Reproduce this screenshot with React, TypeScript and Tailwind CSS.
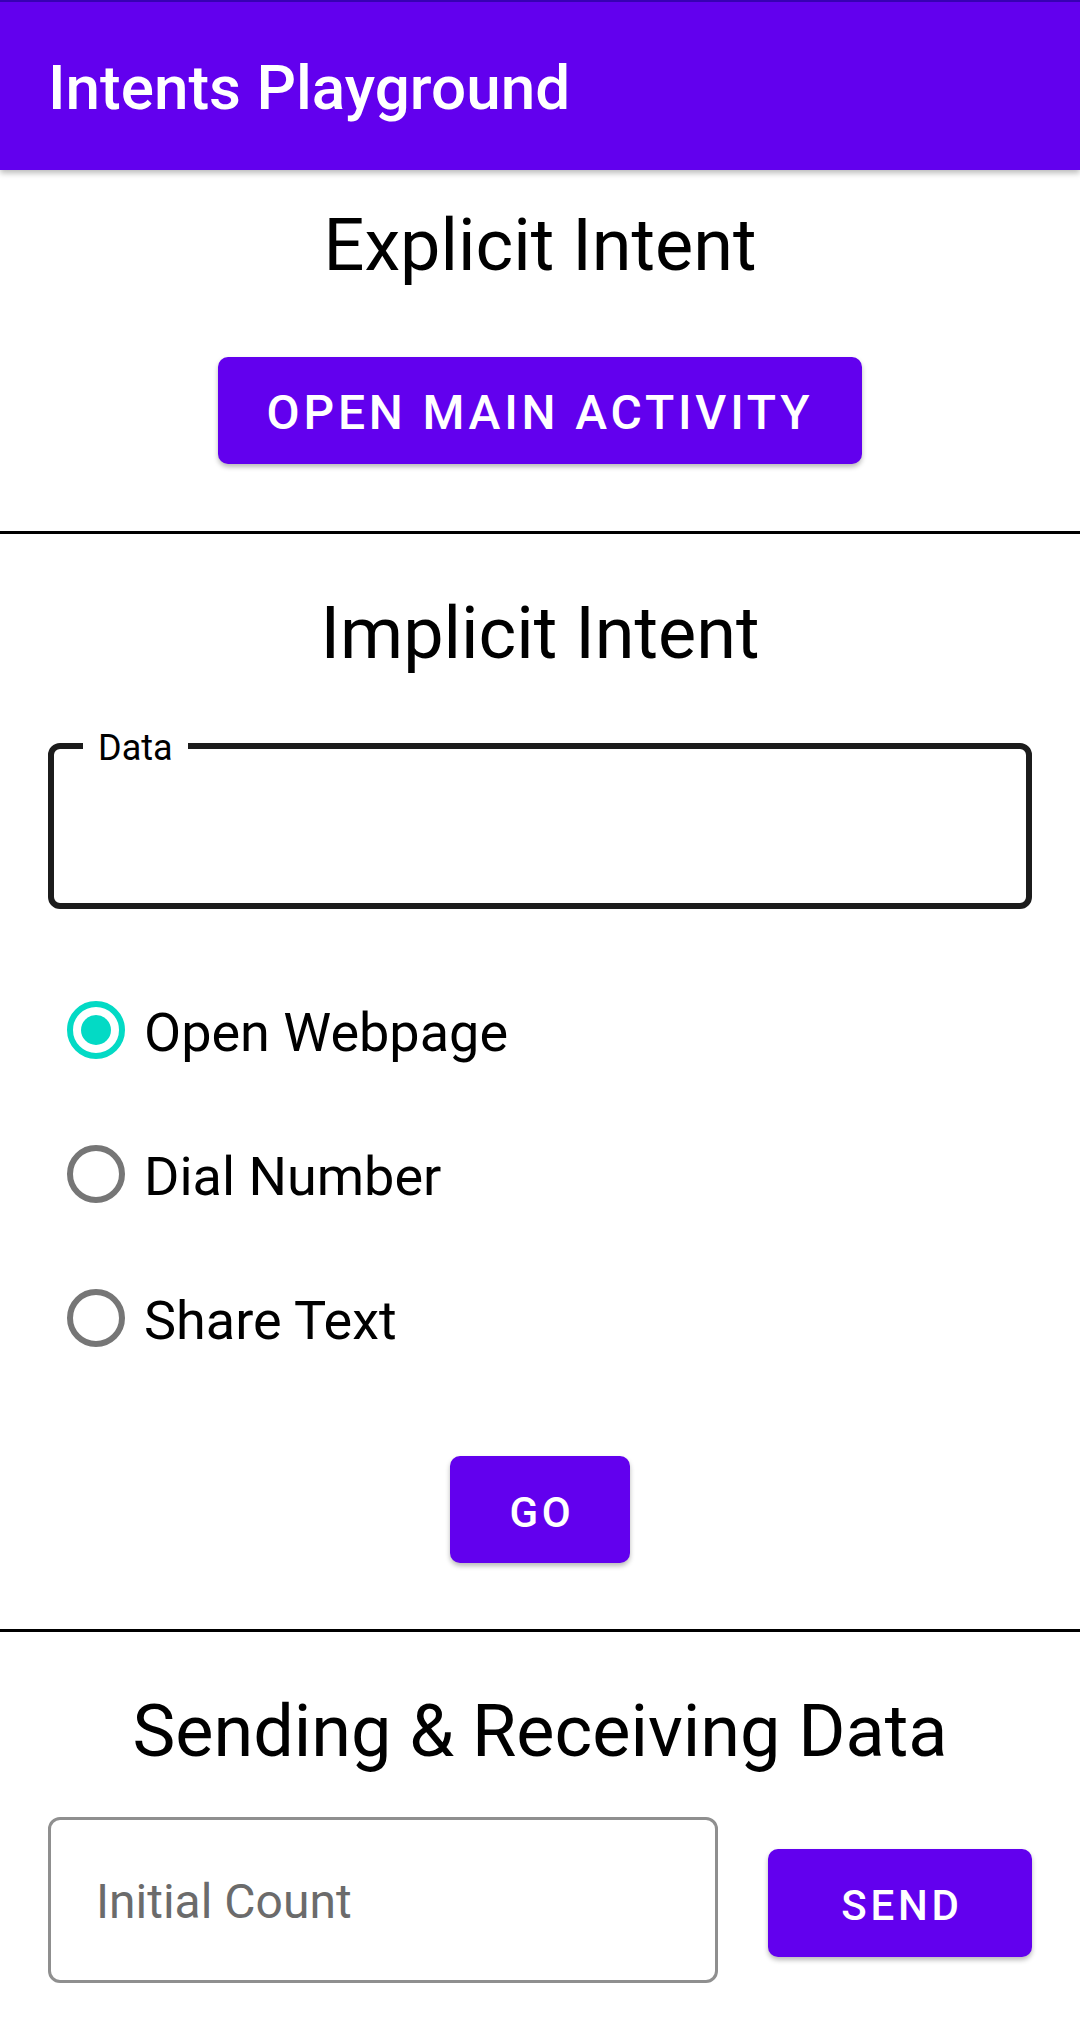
import React, { useState } from 'react';

type IntentAction = 'webpage' | 'dial' | 'share';

const ACTIONS: { id: IntentAction; label: string }[] = [
  { id: 'webpage', label: 'Open Webpage' },
  { id: 'dial', label: 'Dial Number' },
  { id: 'share', label: 'Share Text' },
];

const Divider: React.FC = () => <div className="h-[3px] w-full bg-black" />;

const SectionTitle: React.FC<{ children: React.ReactNode; className?: string }> = ({ children, className }) => (
  <h2 className={`text-center text-[72px] leading-[84px] font-normal text-black ${className ?? ''}`}>{children}</h2>
);

const App: React.FC = () => {
  const [action, setAction] = useState<IntentAction>('webpage');
  const [data, setData] = useState('');
  const [count, setCount] = useState('');

  return (
    <div className="min-h-screen bg-white font-[Roboto,sans-serif] text-black">
      {/* App bar */}
      <header className="relative z-10 shadow-[0_3px_6px_rgba(0,0,0,0.28)]">
        <div className="h-[2px] bg-[#3700b3]" />
        <div className="flex h-[168px] items-center bg-[#6200ee] px-[48px] pt-[4px]">
          <h1 className="text-[62px] leading-none font-medium text-white">Intents Playground</h1>
        </div>
      </header>

      {/* Explicit intent */}
      <section className="flex flex-col items-center">
        <SectionTitle className="mt-[34px]">Explicit Intent</SectionTitle>
        <button className="mt-[69px] flex h-[107px] items-center rounded-[10px] bg-[#6200ee] px-[49px] pt-[4px] text-[48px] font-medium tracking-[3.8px] text-white uppercase shadow-[0_3px_5px_rgba(0,0,0,0.28)]">
          Open Main Activity
        </button>
      </section>
      <div className="mt-[67px]">
        <Divider />
      </div>

      {/* Implicit intent */}
      <section className="flex flex-col">
        <SectionTitle className="mt-[58px]">Implicit Intent</SectionTitle>

        <div className="relative mx-[48px] mt-[67px] h-[166px] rounded-[12px] border-[6px] border-[#1c1c1c]">
          <span className="absolute top-[-19px] left-[29px] bg-white px-[15px] text-[36px] leading-[36px] text-black">
            Data
          </span>
          <input
            value={data}
            onChange={e => setData(e.target.value)}
            className="h-full w-full bg-transparent px-[44px] text-[48px] outline-none"
          />
        </div>

        <div className="mt-[49px] flex flex-col pl-[67px]">
          {ACTIONS.map(a => {
            const checked = action === a.id;
            return (
              <label key={a.id} className="flex h-[144px] cursor-pointer items-center" onClick={() => setAction(a.id)}>
                <span
                  className={`flex h-[58px] w-[58px] items-center justify-center rounded-full border-[6px] ${
                    checked ? 'border-[#03dac5]' : 'border-[#767676]'
                  }`}
                >
                  {checked && <span className="h-[30px] w-[30px] rounded-full bg-[#03dac5]" />}
                </span>
                <span className="ml-[19px] pt-[5px] text-[54px] leading-none">{a.label}</span>
              </label>
            );
          })}
        </div>

        <button className="mx-auto mt-[66px] flex h-[107px] w-[180px] items-center justify-center rounded-[10px] bg-[#6200ee] pt-[5px] pl-[4px] text-[42px] font-medium tracking-[3.75px] text-white uppercase shadow-[0_3px_5px_rgba(0,0,0,0.28)]">
          Go
        </button>
      </section>
      <div className="mt-[66px]">
        <Divider />
      </div>

      {/* Sending & receiving data */}
      <section className="flex flex-col">
        <SectionTitle className="mt-[58px]">Sending &amp; Receiving Data</SectionTitle>
        <div className="mx-[48px] mt-[43px] flex items-center gap-[50px]">
          <div className="flex h-[166px] flex-1 items-center rounded-[12px] border-[3px] border-[#8f8f8f]">
            <input
              value={count}
              onChange={e => setCount(e.target.value)}
              placeholder="Initial Count"
              className="h-full w-full bg-transparent px-[45px] pt-[2px] text-[48px] text-black outline-none placeholder:text-[#6b6b6b]"
            />
          </div>
          <button className="mt-[6px] flex h-[108px] w-[264px] items-center justify-center rounded-[10px] bg-[#6200ee] pt-[5px] pl-[4px] text-[42px] font-medium tracking-[3.75px] text-white uppercase shadow-[0_3px_5px_rgba(0,0,0,0.28)]">
            Send
          </button>
        </div>
      </section>
    </div>
  );
};

export default App;
